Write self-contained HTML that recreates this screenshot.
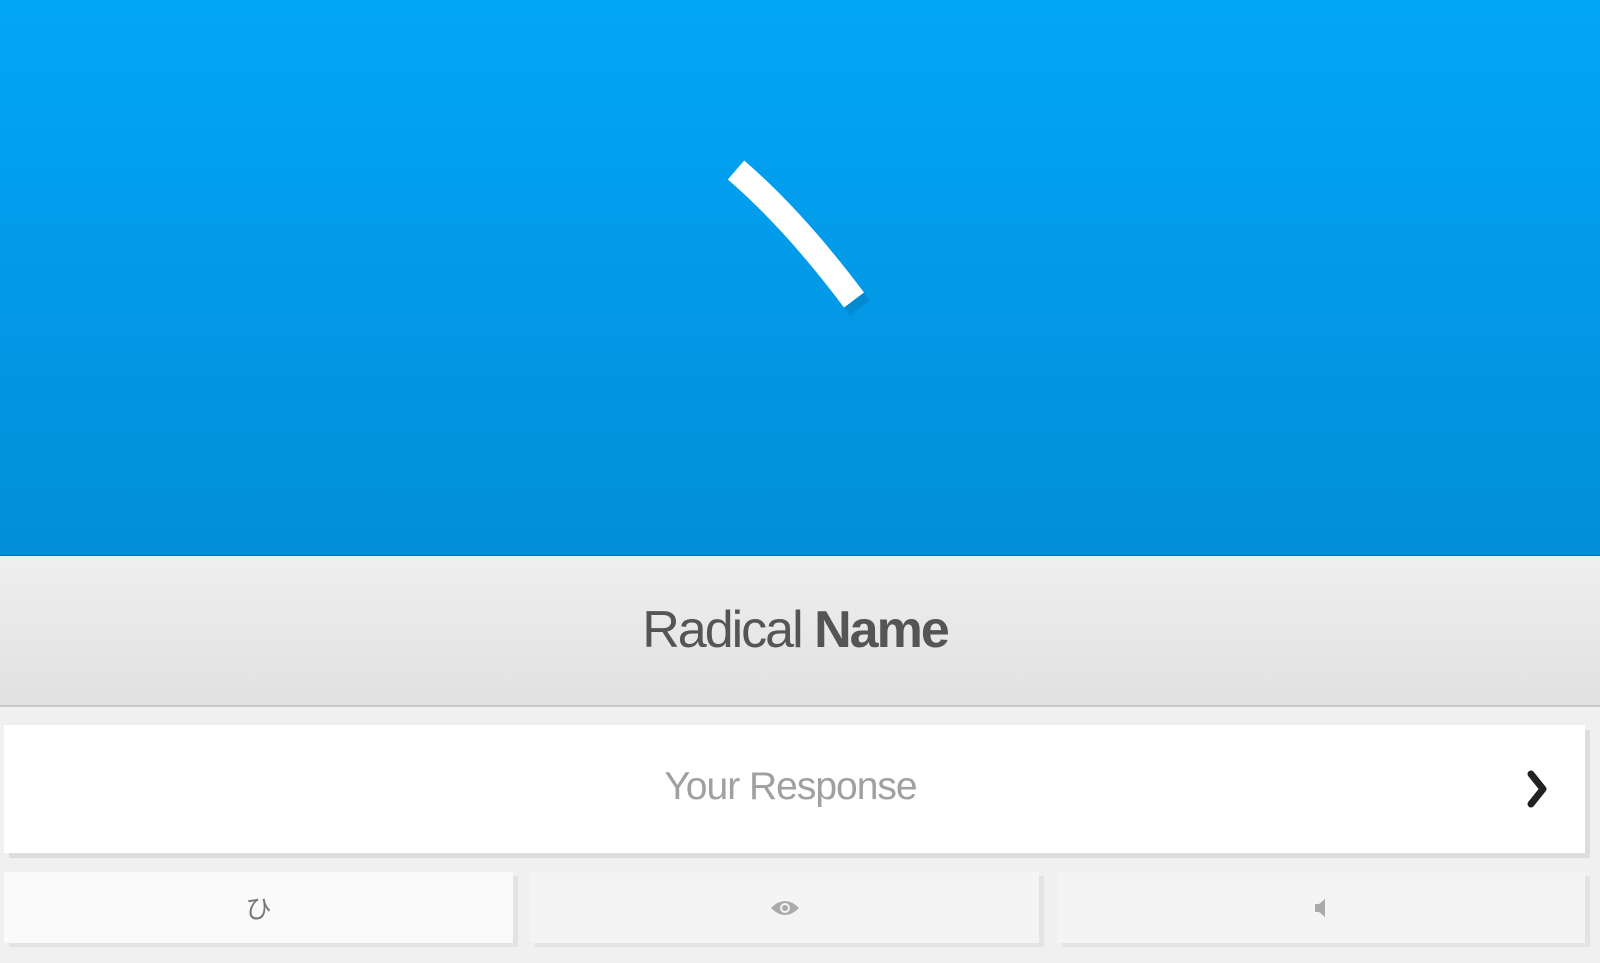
<!DOCTYPE html>
<html><head><meta charset="utf-8"><style>
html,body{margin:0;padding:0;width:1600px;height:963px;overflow:hidden;background:#f0f0f0;font-family:"Liberation Sans","Noto Sans CJK JP",sans-serif}
.blue{position:absolute;left:0;top:0;width:1600px;height:555px;background:linear-gradient(#02a6f8,#028ed8);border-bottom:1px solid #0378b8}
.head{position:absolute;left:0;top:556px;width:1600px;height:149px;background:linear-gradient(#efefef,#e1e1e1);border-bottom:2px solid #c9c9c9;text-align:center}
.head span{display:inline-block;margin-top:44px;margin-right:10px;font-size:52px;color:#555;letter-spacing:-2px}
.inp{position:absolute;left:4px;top:725px;width:1581px;height:128px;background:#fff;box-shadow:5px 5px 0 #ddd;text-align:center}
.inp span{display:inline-block;margin-top:40px;margin-right:8px;font-size:39px;color:#a0a0a0;letter-spacing:-1px}
.btn{position:absolute;top:872px;height:71px;background:#f4f4f4;box-shadow:5px 4px 0 #e3e3e3;display:flex;align-items:center;justify-content:center;color:#888}
</style></head><body>
<div class="blue"></div>
<svg style="position:absolute;left:0;top:0" width="1600" height="555">
<path d="M742 176 Q800 226 860 308" stroke="#0580c4" stroke-width="25" fill="none" opacity="0.6"/>
<path d="M736 170 Q794 220 854 300" stroke="#fff" stroke-width="25" fill="none"/>
</svg>
<div class="head"><span>Radical <b>Name</b></span></div>
<div class="inp"><span>Your Response</span>
<svg style="position:absolute;left:1520px;top:42px" width="30" height="44"><path d="M7 7 L19 22 L7 37" stroke="#222" stroke-width="7" fill="none" stroke-linecap="round" stroke-linejoin="round"/></svg></div>
<div class="btn" style="left:4px;width:509px;background:#fafafa"><span style="font-size:26px;color:#777">ひ</span></div>
<div class="btn" style="left:530px;width:509px"><svg width="30" height="20"><path d="M1 10 Q15 -4 29 10 Q15 24 1 10Z" fill="#aaa"/><circle cx="15" cy="10" r="5" fill="#f4f4f4"/><circle cx="15" cy="10" r="3" fill="#aaa"/></svg></div>
<div class="btn" style="left:1057px;width:528px"><svg width="16" height="22"><path d="M2 7 H6 L12 2 V20 L6 15 H2Z" fill="#aaa"/></svg></div>
</body></html>
